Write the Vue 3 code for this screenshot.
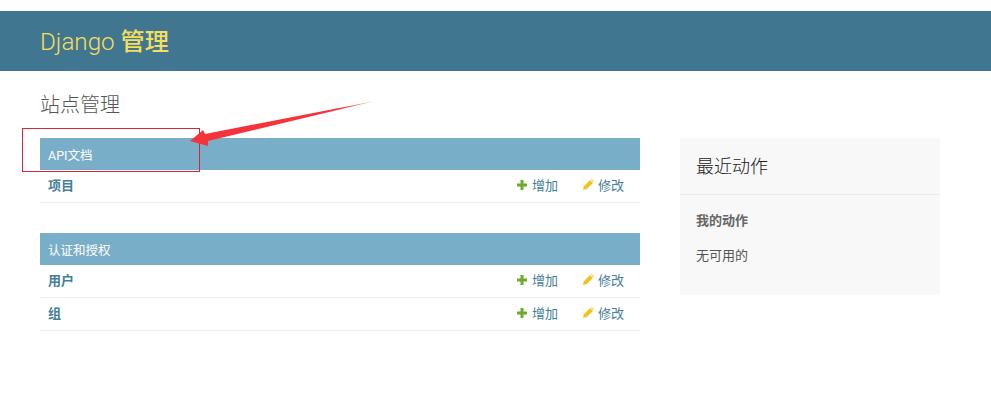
<template>
  <div class="page">
    <header class="header">
      <h1 class="brand">Django <b>管理</b></h1>
    </header>

    <main class="content">
      <h2 class="page-title">站点管理</h2>

      <div class="columns">
        <div class="apps">
          <section v-for="app in apps" :key="app.name" class="module">
            <h3 class="caption">{{ app.name }}</h3>
            <div v-for="model in app.models" :key="model" class="row">
              <span class="model">{{ model }}</span>
              <span class="action">
                <svg class="icon" viewBox="0 0 10 10">
                  <path d="M3.5 0h3v3.5H10v3H6.5V10h-3V6.5H0v-3h3.5z" fill="#70a92b" />
                </svg>
                增加
              </span>
              <span class="action change">
                <svg class="icon pencil" viewBox="0 0 10 10">
                  <path d="M0 10l.8-3.4L6.4 1l2.7 2.7L3.4 9.2z" fill="#efc31f" />
                  <path d="M7 .5l.7-.5L10 2.3l-.4.7z" fill="#efc31f" />
                </svg>
                修改
              </span>
            </div>
          </section>
        </div>

        <aside class="recent">
          <h2 class="recent-title">最近动作</h2>
          <div class="recent-body">
            <h3 class="recent-sub">我的动作</h3>
            <p class="recent-none">无可用的</p>
          </div>
        </aside>
      </div>
    </main>

    <!-- screenshot annotation drawn over the page -->
    <div class="mark-box"></div>
    <svg class="mark-arrow" width="991" height="402" viewBox="0 0 991 402">
      <defs>
        <linearGradient id="arrow-fade" x1="190" y1="141" x2="375" y2="101" gradientUnits="userSpaceOnUse">
          <stop offset="0" stop-color="#f5333a" />
          <stop offset="0.8" stop-color="#f5333a" />
          <stop offset="1" stop-color="#f8b8ae" />
        </linearGradient>
      </defs>
      <path d="M190 141L203 130L205 134L375 101L208 141L208 146z" fill="url(#arrow-fade)" />
    </svg>
  </div>
</template>

<script setup>
const apps = [
  { name: 'API文档', models: ['项目'] },
  { name: '认证和授权', models: ['用户', '组'] }
]
</script>

<style>
html,
body {
  margin: 0;
  background: #fff;
}
</style>

<style scoped>
.page {
  position: relative;
  width: 991px;
  height: 402px;
  overflow: hidden;
  padding-top: 11px;
  box-sizing: border-box;
  font-family: Roboto, "Liberation Sans", "Noto Sans CJK SC", sans-serif;
  color: #333;
}

.header {
  height: 60px;
  background: #417690;
  padding: 0 40px 3px;
  box-sizing: border-box;
  display: flex;
  align-items: center;
}

.brand {
  margin: 0;
  font-size: 24.2px;
  font-weight: 300;
  color: #f5dd5d;
}

.brand b {
  font-weight: 500;
}

.content {
  padding: 20px 40px 0;
}

.page-title {
  margin: 0 0 19px;
  height: 28px;
  line-height: 28px;
  font-size: 20px;
  font-weight: 300;
  color: #555;
}

.columns {
  display: flex;
  gap: 40px;
}

.apps {
  width: 600px;
}

.module {
  margin-bottom: 30px;
}

.caption {
  margin: 0;
  height: 32px;
  line-height: 35px;
  padding: 0 8px;
  background: #79aec8;
  color: #fff;
  font-size: 12.5px;
  font-weight: 400;
}

.row {
  height: 29px;
  border-bottom: 1px solid #eee;
  display: flex;
  align-items: center;
  padding: 0 16px 3px 8px;
  font-size: 13px;
  color: #447e9b;
}

.model {
  flex: 1;
  font-weight: 700;
}

.action {
  display: flex;
  align-items: center;
  gap: 5px;
}

.change {
  margin-left: 25px;
  gap: 4px;
}

.icon {
  width: 10px;
  height: 10px;
}

.pencil {
  width: 11px;
  height: 11px;
}

.recent {
  width: 260px;
  height: 157px;
  background: #f8f8f8;
}

.recent-title {
  margin: 0;
  height: 56px;
  line-height: 58px;
  padding: 0 16px;
  border-bottom: 1px solid #eaeaea;
  font-size: 18px;
  font-weight: 300;
  color: #222;
}

.recent-body {
  padding: 0 16px;
  font-size: 13px;
  color: #666;
}

.recent-sub {
  margin: 17px 0 0;
  line-height: 18px;
  font-size: 13px;
  font-weight: 700;
}

.recent-none {
  margin: 17px 0 0;
  line-height: 18px;
  color: #555;
}

.mark-box {
  position: absolute;
  left: 22px;
  top: 128px;
  width: 176px;
  height: 42px;
  border: 1px solid #d9263f;
}

.mark-arrow {
  position: absolute;
  left: 0;
  top: 0;
}
</style>
